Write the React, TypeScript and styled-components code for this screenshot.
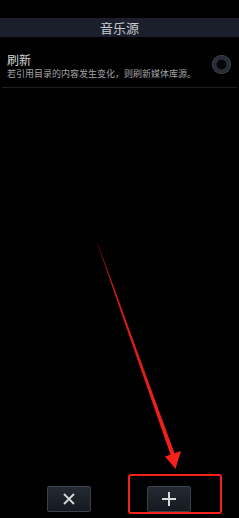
import styled, { createGlobalStyle } from "styled-components";

const GlobalStyle = createGlobalStyle`
  html, body {
    margin: 0;
    padding: 0;
    background: #000;
  }
  body {
    font-family: "Noto Sans CJK SC", "Noto Sans", sans-serif;
  }
`;

const Screen = styled.div`
  position: relative;
  width: 239px;
  height: 518px;
  background: #000;
  display: flex;
  flex-direction: column;
  overflow: hidden;
`;

const StatusGap = styled.div`
  height: 18px;
`;

const TitleBar = styled.div`
  height: 19px;
  background: #1b1f2c;
  display: flex;
  align-items: center;
  justify-content: center;
  color: #c9ccd2;
  font-size: 13px;
  line-height: 19px;
`;

const Row = styled.div`
  display: flex;
  align-items: center;
  margin: 0 2px;
  padding: 15px 6px 7px 5px;
  border-bottom: 1px solid #1e2024;
`;

const RowText = styled.div`
  flex: 1;
  display: flex;
  flex-direction: column;
`;

const RowTitle = styled.div`
  color: #d6d7da;
  font-size: 12px;
  line-height: 15px;
`;

const RowSub = styled.div`
  color: #a2a4a8;
  font-size: 9px;
  line-height: 13px;
  white-space: nowrap;
`;

const Radio = styled.div`
  width: 19px;
  height: 19px;
  border-radius: 50%;
  background: radial-gradient(circle, #050607 0 4.5px, #2c323b 5.5px, #20252c 9.5px);
  box-shadow: inset 0 0 0 1px #3a414a;
  margin-top: -4px;
`;

const Spacer = styled.div`
  flex: 1;
`;

const BottomBar = styled.div`
  height: 32px;
  display: flex;
  align-items: flex-start;
  padding-left: 47px;
  gap: 56px;
`;

const IconButton = styled.div`
  width: 44px;
  height: 26px;
  box-sizing: border-box;
  border: 1px solid #3b424a;
  border-radius: 2px;
  background: linear-gradient(#242a33, #161a20);
  display: flex;
  align-items: center;
  justify-content: center;
`;

const Highlight = styled.div`
  position: absolute;
  left: 128px;
  top: 474px;
  width: 94px;
  height: 40px;
  box-sizing: border-box;
  border: 2px solid #f4221a;
  border-radius: 3px;
`;

const Arrow = styled.svg`
  position: absolute;
  left: 0;
  top: 0;
  pointer-events: none;
`;

export default function App() {
  return (
    <>
      <GlobalStyle />
      <Screen>
        <StatusGap />
        <TitleBar>音乐源</TitleBar>
        <Row>
          <RowText>
            <RowTitle>刷新</RowTitle>
            <RowSub>若引用目录的内容发生变化，则刷新媒体库源。</RowSub>
          </RowText>
          <Radio />
        </Row>
        <Spacer />
        <BottomBar>
          <IconButton>
            <svg width="14" height="14" viewBox="0 0 14 14">
              <path d="M2 2 L12 12 M12 2 L2 12" stroke="#d5d8dd" strokeWidth="1.8" />
            </svg>
          </IconButton>
          <IconButton>
            <svg width="16" height="16" viewBox="0 0 16 16">
              <path d="M8 1 V15 M1 8 H15" stroke="#d5d8dd" strokeWidth="2" />
            </svg>
          </IconButton>
        </BottomBar>
        <Highlight />
        <Arrow width="239" height="518" viewBox="0 0 239 518">
          <defs>
            <linearGradient id="fade" x1="97" y1="243" x2="175" y2="468" gradientUnits="userSpaceOnUse">
              <stop offset="0" stopColor="#4a0806" />
              <stop offset="0.2" stopColor="#d01a12" />
              <stop offset="1" stopColor="#f4221a" />
            </linearGradient>
          </defs>
          <polygon points="97,243 97.8,243 175.5,456 171.5,457.5" fill="url(#fade)" />
          <polygon points="175.5,469 165,456.5 181,451" fill="#f4221a" />
        </Arrow>
      </Screen>
    </>
  );
}
